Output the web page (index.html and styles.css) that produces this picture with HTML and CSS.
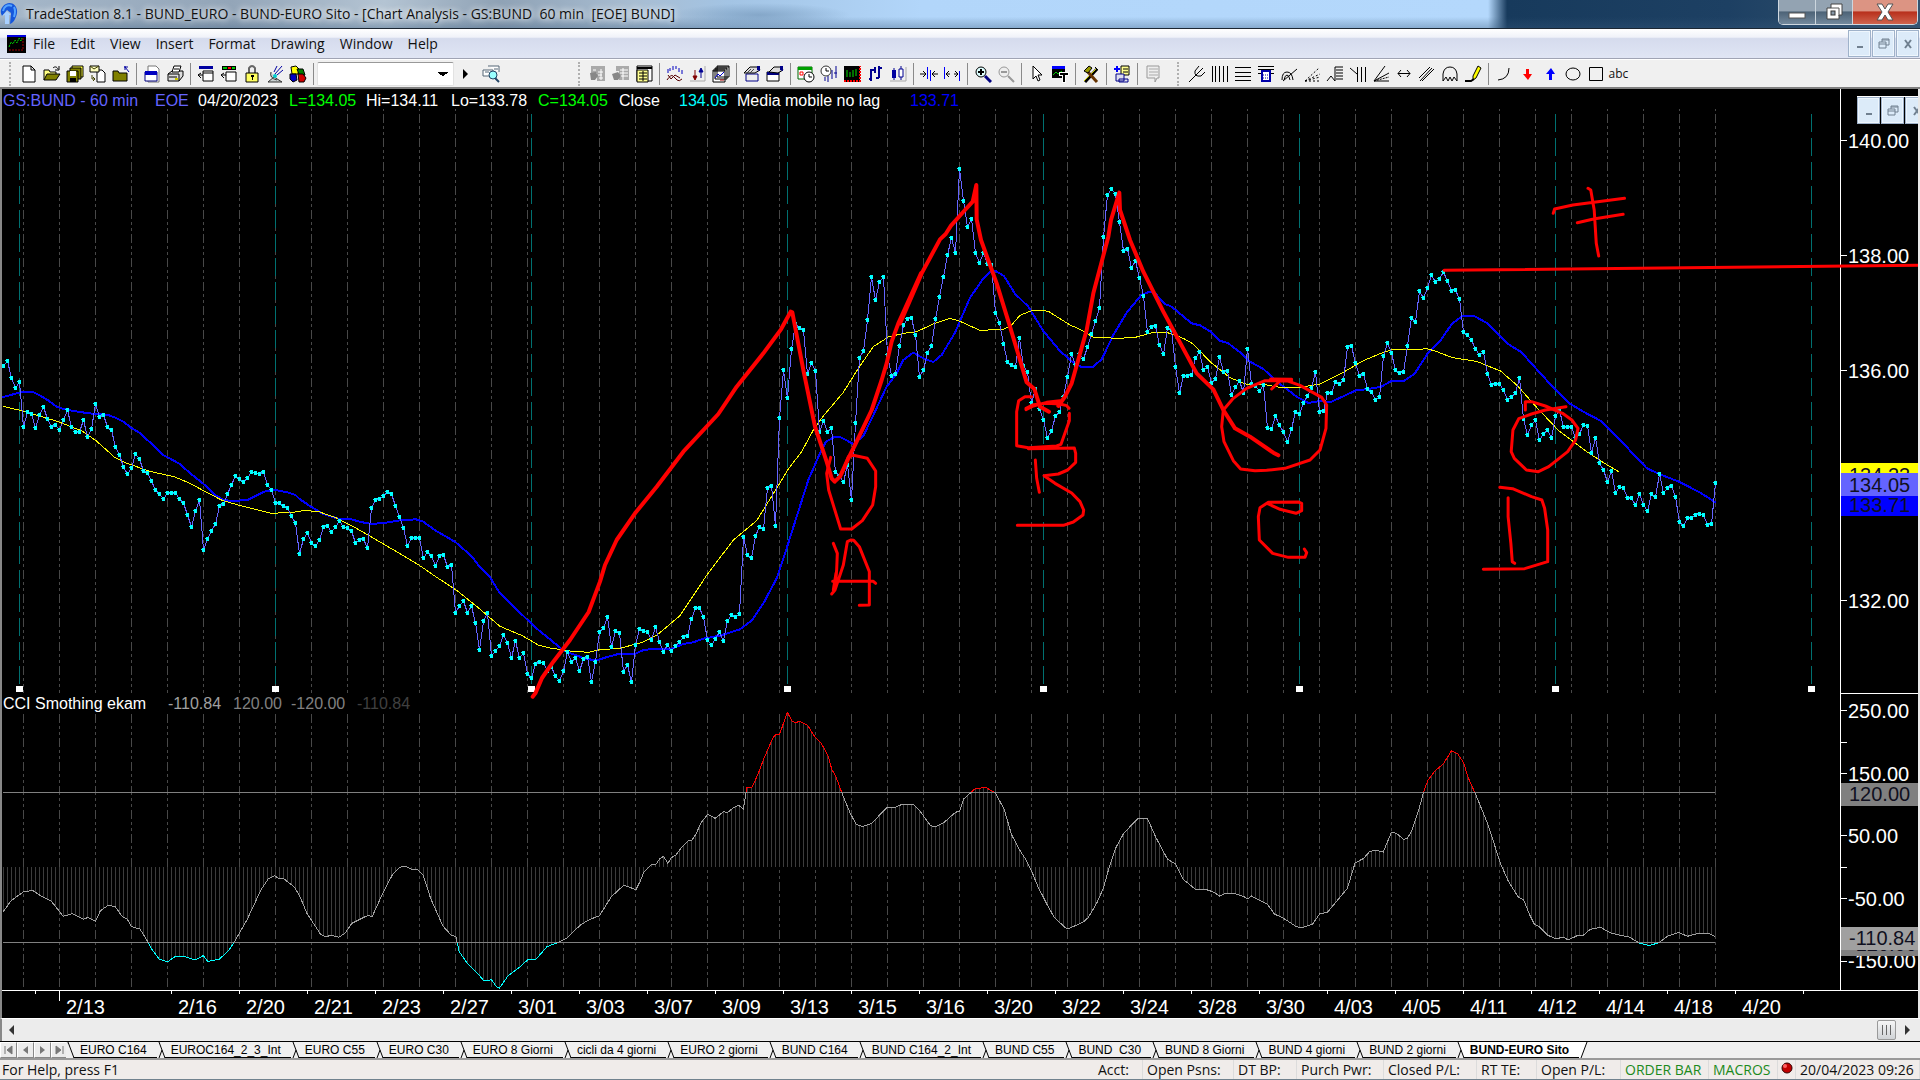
FILE: index.html
```html
<!DOCTYPE html>
<html lang="en">
<head>
<meta charset="utf-8">
<title>TradeStation 8.1</title>
<link rel="stylesheet" href="styles.css">
</head>
<body>
<header class="titlebar">
  <svg class="app-icon" viewBox="0 0 18 24"><path d="M6 2C11-1 18 3 17 11c-1 6-4 10-7 11l1-11-4-3-5 6C-1 9 2 4 6 2z" fill="#1557dc"/><path d="M7 9l4 4-2 0 0 9-4 0 0-9-3 1z" fill="#a8d0ff"/><path d="M3 9C4 4 8 2 12 4M14 5q2 4 0 10" fill="none" stroke="#55a4ff" stroke-width="2"/></svg>
  <h1 class="title">TradeStation 8.1 - BUND_EURO - BUND-EURO Sito - [Chart Analysis - GS:BUND  60 min  [EOE] BUND]</h1>
  <div class="winbuttons">
    <button class="wb" aria-label="Minimize"><svg width="18" height="20"><rect x="1" y="11" width="16" height="5" fill="#fff" stroke="#555"/></svg></button>
    <button class="wb" aria-label="Restore"><svg width="20" height="20"><path d="M7 2h11v11h-3v4H3V6h4z" fill="#fff" stroke="#444"/><path d="M7 6h8v8" fill="none" stroke="#555"/><rect x="7" y="9" width="4" height="4" fill="#8798a8" stroke="#333"/></svg></button>
    <button class="wb wb-close" aria-label="Close"><svg width="20" height="20"><path d="M2 2h5l3 5 3-5h5l-5 8 5 8h-5l-3-5-3 5H2l5-8z" fill="#fff" stroke="#555"/></svg></button>
  </div>
</header>
<nav class="menubar">
  <svg class="doc-icon" viewBox="0 0 19 18"><path d="M0 0h19v18H0z"/><path d="M0 0h19v2H0z" fill="#0000e0"/><path d="M2 12l2-5 2 2 2-4 2 3 2-5 2 3 1-3" fill="none" stroke="#00d000" stroke-dasharray="2 1"/><path d="M2 15h15M16 3v12" fill="none" stroke="#a00000" stroke-dasharray="2 1"/></svg>
  <button>File</button><button>Edit</button><button>View</button><button>Insert</button><button>Format</button><button>Drawing</button><button>Window</button><button>Help</button>
  <div class="mdi">
    <button aria-label="Minimize chart"><svg width="16" height="16"><path d="M5 10h6v2H5z" fill="#708090"/></svg></button>
    <button aria-label="Restore chart"><svg width="16" height="16"><path d="M6 6V3h7v6h-3M3 6h7v6H3zM3 8h7M6 4h7" fill="none" stroke="#708090"/></svg></button>
    <button aria-label="Close chart"><svg width="16" height="16"><path d="M5 4l6 8M11 4l-6 8" fill="none" stroke="#708090" stroke-width="2"/></svg></button>
  </div>
</nav>
<div class="toolbar">
  <div class="tools tools-file"><i class="grip"></i>
    <button aria-label="New"><svg viewBox="0 0 18 18"><path d="M3 1h8l4 4v12H3zM11 1v4h4" fill="#fff" stroke="#000"/></svg></button>
    <button aria-label="Open"><svg viewBox="0 0 18 18"><path d="M1 15V5h5l1 2h6v3" fill="#ffff80" stroke="#000"/><path d="M1 15l3-6h13l-4 6z" fill="#808000" stroke="#000"/><path d="M10 3c2-2 4-1 5 1M16 1v4h-4" fill="none" stroke="#000"/></svg></button>
    <button aria-label="Save all"><svg viewBox="0 0 18 18"><path d="M6 1h11v11H6z" fill="#ffff40" stroke="#000"/><path d="M4 3h11v11H4z" fill="#808000" stroke="#000"/><path d="M1 6h11v11H1z" fill="#808000" stroke="#000"/><path d="M4 6h6v5H4z" fill="#fff"/><path d="M4 13h6v4H4z"/></svg></button>
    <button aria-label="New from mail"><svg viewBox="0 0 18 18"><path d="M8 5h5l3 3v9H8z" fill="#fff" stroke="#000"/><path d="M1 1h9v6H1z" fill="#ffffc0" stroke="#000"/><path d="M1 1l4 3 5-3M3 10v4h3M4 12l2 2-2 2" fill="none" stroke="#404000"/></svg></button>
    <button aria-label="Close file"><svg viewBox="0 0 18 18"><path d="M1 16V6h5l1 2h8v8z" fill="#808000" stroke="#000"/><path d="M12 2h4M13 1v4M13 2l4 5" stroke="#0000a0" fill="none"/></svg></button>
    <i class="sep"></i>
    <button aria-label="Window"><svg viewBox="0 0 18 18"><path d="M5 1h8l3 3v13H5z" fill="#fff" stroke="#777"/><path d="M2 7h12v9H2z" fill="#fff" stroke="#000080"/><path d="M2 6h12v4H2z" fill="#0000c0"/></svg></button>
    <button aria-label="Print"><svg viewBox="0 0 18 18"><path d="M2 9l4-3h11v5l-4 5H2z" fill="#ddd" stroke="#000"/><path d="M6 7l2-6h7l-2 6z" fill="#fff" stroke="#000"/><path d="M2 9h11v7M8 4h5M3 12h8" fill="none" stroke="#000"/><path d="M9 13h3v2H9z" fill="#cc0"/></svg></button>
    <i class="sep"></i>
    <button aria-label="Insert bar"><svg viewBox="0 0 18 18"><path d="M2 1h14v3H2z" fill="#0000a0"/><path d="M6 6h10v10H6z" fill="#fff" stroke="#000"/><path d="M6 8h10M1 10h5M4 8l-3 2 3 3" fill="none" stroke="#000"/></svg></button>
    <button aria-label="Insert colours"><svg viewBox="0 0 18 18"><path d="M2 1h14v4H2z"/><path d="M3 2h4v2H3z" fill="#00c000"/><path d="M8 2h3v2H8z" fill="red"/><path d="M12 2h3v2h-3z" fill="#0c0"/><path d="M6 7h10v9H6zM1 10h5M4 8l-3 2 3 3" fill="#fff" stroke="#000"/></svg></button>
    <button aria-label="Lock"><svg viewBox="0 0 18 18"><path d="M6 8V3q3-4 6 0v5" fill="none" stroke="#666" stroke-width="2"/><path d="M3 8h12v9H3z" fill="#ffff60" stroke="#000"/><path d="M8 10h3v2h-1v3H9v-3H8z"/></svg></button>
    <button aria-label="Dish"><svg viewBox="0 0 18 18"><path d="M16 1L9 9M17 5l-6 5M11 1L8 7" stroke="#0000a0" fill="none"/><path d="M2 17l6-5 8 5zM5 7q-2 6 6 8" fill="#c8d0d0" stroke="#333"/><circle cx="9" cy="11" r="2" fill="#0cc"/></svg></button>
    <button aria-label="Objects"><svg viewBox="0 0 18 18"><path d="M2 2l5-1 3 3-1 5-6 0z" fill="#ffff00" stroke="#000"/><path d="M8 4l6 0 2 6-5 2z" fill="#008000" stroke="#000"/><path d="M1 9h6l1 6-4 2-3-3z" fill="#0000c0" stroke="#000"/><path d="M9 9h5l3 4-2 4h-5z" fill="#d00000" stroke="#000"/></svg></button>
    <i class="sep"></i>
    <select class="symbol" aria-label="Symbol"><option></option></select>
    <button class="go" aria-label="Go"><svg viewBox="0 0 18 18"><path d="M6 4l5 5-5 5z"/></svg></button>
    <button aria-label="Lookup"><svg viewBox="0 0 18 18"><path d="M1 5h10v6H1zM6 1h11v6M12 4h4M3 7h4" fill="#fff" stroke="#567"/><circle cx="11" cy="10" r="4" fill="#9ff" stroke="#246"/><path d="M13 13l4 4" stroke="#246" stroke-width="2"/></svg></button>
  </div>
  <div class="tools tools-chart"><i class="grip"></i>
    <button aria-label="Quote"><svg viewBox="0 0 18 18"><path d="M2 1h14v15H8V8H2z" fill="#aaa"/><path d="M4 5h3M9 7h5M9 10h4M10 13h4M12 4v11" stroke="#fff"/><path d="M1 8l6-1 2 4-3 4H2z" fill="#888"/></svg></button>
    <button aria-label="Quote list"><svg viewBox="0 0 18 18"><path d="M4 1h13v14H7V6H4z" fill="#aaa"/><path d="M8 5h8M8 8h8M8 11h8M11 3v12" stroke="#fff"/><path d="M0 9l6-2 3 4-3 4H2z" fill="#888"/></svg></button>
    <button aria-label="Table"><svg viewBox="0 0 18 18"><path d="M2 1h15v15H2z" fill="#fff" stroke="#000"/><path d="M2 2h15v2H2z"/><path d="M2 5h11v12H2z" fill="#ffff90" stroke="#000"/><path d="M4 8h8M4 11h8M4 14h8M8 6v10" stroke="#000"/></svg></button>
    <i class="sep"></i>
    <button aria-label="Studies"><svg viewBox="0 0 18 18"><path d="M2 8V4M4 6V3M7 5V1M10 4V1M13 7V3M16 9V5" stroke="#0000c0"/><path d="M1 15q4-6 6-4t4 4 5-1M2 10l3 4 4-4 5 3" fill="none" stroke="#500"/></svg></button>
    <button aria-label="Signals"><svg viewBox="0 0 18 18"><path d="M6 5v9M4 11l2 4 2-4z" stroke="#800000" fill="#800000"/><path d="M12 13V4M10 7l2-4 2 4z" stroke="#000090" fill="#000090"/><path d="M1 16h15V1" fill="none" stroke="#aaa"/></svg></button>
    <button aria-label="Cascade charts"><svg viewBox="0 0 18 18"><path d="M5 1h12v11H5zM3 3h12v11H3zM1 5h12v12H1z" fill="#fff" stroke="#000"/><path d="M1 6h12M3 4h12M5 2h12" stroke="#000"/><path d="M3 13l3-4 2 2 4-4" fill="none" stroke="#00c"/><path d="M8 15h4" stroke="#a00"/></svg></button>
    <i class="sep"></i>
    <button aria-label="Format study"><svg viewBox="0 0 18 18"><path d="M3 9h12v7H3z" fill="#eee" stroke="#008"/><path d="M1 8l6-6 8 0 2 3-5 3z" fill="#ddd" stroke="#000"/><path d="M14 1h3v5l-3-1z" fill="#008"/><path d="M4 8l4-4M7 8l4-4" stroke="#444"/></svg></button>
    <button aria-label="Format window"><svg viewBox="0 0 18 18"><path d="M1 7h12v9H1z" fill="#fff" stroke="#000"/><path d="M1 7h12v3H1z" fill="#000080"/><path d="M3 7l5-5 7 0 2 3-5 3z" fill="#ddd" stroke="#000"/><path d="M14 1h3v5l-3-1z" fill="#008"/></svg></button>
    <i class="sep"></i>
    <button aria-label="Calendar"><svg viewBox="0 0 18 18"><path d="M1 2h14v12H1z" fill="#fff" stroke="#060"/><path d="M1 2h14v3H1z" fill="#00a000"/><path d="M3 7h3v3H3z" fill="none" stroke="red"/><circle cx="12" cy="12" r="5" fill="#fff" stroke="#000"/><path d="M12 9v3h3" fill="none" stroke="#000"/></svg></button>
    <button aria-label="Interval"><svg viewBox="0 0 18 18"><circle cx="6" cy="6" r="5" fill="#fff" stroke="#333"/><path d="M6 3v3h3" fill="none" stroke="#000"/><path d="M5 12v4M8 11v6M12 5v9M16 1v12M14 8h3" stroke="#000090"/></svg></button>
    <button aria-label="Chart colours"><svg viewBox="0 0 18 18"><path d="M1 1h16v16H1z"/><path d="M1 16h16V1" fill="none" stroke="red" stroke-dasharray="2 1" stroke-width="2"/><path d="M4 5v7M7 7v5M10 5v7M13 4v7" stroke="#00e000"/></svg></button>
    <button aria-label="Bar chart"><svg viewBox="0 0 18 18"><path d="M5 4v12M5 5h4V2v6M3 14h2M13 1v12M10 13h3M13 3h3" fill="none" stroke="#000090" stroke-width="2"/></svg></button>
    <button aria-label="Candles"><svg viewBox="0 0 18 18"><path d="M5 3v12M12 1v14" stroke="#000090"/><path d="M3 5h4v8H3z" fill="#0000a0"/><path d="M10 4h4v8h-4z" fill="#fff" stroke="#000090"/><path d="M17 2v14H1" stroke="#aaa" fill="none"/></svg></button>
    <i class="sep"></i>
    <button aria-label="Narrow bars"><svg viewBox="0 0 18 18"><path d="M7.500 2v12M10.500 5v11" stroke="#00f"/><path d="M0 9h5M18 9h-5M3 6l3 3-3 3M15 6l-3 3 3 3" fill="none" stroke="#000"/></svg></button>
    <button aria-label="Widen bars"><svg viewBox="0 0 18 18"><path d="M1.500 2v12M16.500 6v10" stroke="#00f"/><path d="M3 9h4M15 9h-4M6 6L3 9l3 3M12 6l3 3-3 3" fill="none" stroke="#000"/></svg></button>
    <i class="sep"></i>
    <button aria-label="Zoom in"><svg viewBox="0 0 18 18"><circle cx="7" cy="7" r="5" fill="#dff" stroke="#000"/><path d="M4 7h6M7 4v6" stroke="#000" stroke-width="2"/><path d="M11 11l6 6" stroke="#000080" stroke-width="3"/></svg></button>
    <button aria-label="Zoom out"><svg viewBox="0 0 18 18"><circle cx="7" cy="7" r="5" fill="#eee" stroke="#999"/><path d="M4 7h6M11 11l6 6" stroke="#999" stroke-width="2"/></svg></button>
    <i class="sep"></i>
    <button aria-label="Pointer"><svg viewBox="0 0 18 18"><path d="M5 1v13l3-3 2 5 2-1-2-5h4z" fill="#fff" stroke="#000"/></svg></button>
    <button aria-label="Text on chart"><svg viewBox="0 0 18 18"><path d="M1 1h13v12H1z"/><path d="M1 1h13v3H1z" fill="#00f"/><path d="M2 10l3-3 2 2 4-3" stroke="#0c0" fill="none"/><path d="M8 9h10M13 8v10" stroke="#fff" stroke-width="4"/><path d="M9 9h8M13 8v9" stroke="#000" stroke-width="2"/></svg></button>
    <i class="sep"></i>
    <button aria-label="Tools"><svg viewBox="0 0 18 18"><path d="M3 17L15 4" stroke="#000" stroke-width="3"/><path d="M2 16L14 4" stroke="#cc0"/><path d="M5 6l10 11" stroke="#630" stroke-width="3"/><path d="M2 6l5-5 3 2-4 5zM13 2l3 3" fill="#990" stroke="#000"/></svg></button>
    <i class="sep"></i>
    <button aria-label="Add page"><svg viewBox="0 0 18 18"><path d="M8 1h8v9H8z" fill="#ffff90" stroke="#000"/><path d="M10 4h5M10 7h5" stroke="#000"/><path d="M3 9h8v7H3zM6 14h9v3H6z" fill="#dde" stroke="#008"/><path d="M1 4h6M4 1v6" stroke="#00f" stroke-width="2"/></svg></button>
    <i class="sep"></i>
    <button aria-label="Comment"><svg viewBox="0 0 18 18"><path d="M3 1h12v12h-2l-2 4v-4H3z" fill="#eee" stroke="#999"/><path d="M5 4h9M5 7h9M5 10h9" stroke="#aaa"/></svg></button>
  </div>
  <div class="tools tools-draw"><i class="grip"></i>
    <button aria-label="Andrews"><svg viewBox="0 0 18 18"><path d="M1 17l8-8M7 6q-1 6 6 5l4-4M7 6l4-5M9 9l6-6" fill="none" stroke="#000"/></svg></button>
    <button aria-label="Vertical lines"><svg viewBox="0 0 18 18"><path d="M1.500 1v16M4.500 1v16M8.500 1v16M12.500 1v16M16.500 1v16" stroke="#000"/></svg></button>
    <button aria-label="Horizontal lines"><svg viewBox="0 0 18 18"><path d="M1 2.500h16M1 7.500h16M1 11.500h16M1 15.500h16" stroke="#000"/></svg></button>
    <button aria-label="Calculator lines"><svg viewBox="0 0 18 18"><path d="M1 1.500h16M1 4.500h16M1 8.500h16" stroke="#000"/><path d="M5 6h8v10H5z" fill="#fff" stroke="#00a" stroke-width="2"/><path d="M6 10h6M6 13h6" stroke="#00a" stroke-dasharray="1 1"/></svg></button>
    <button aria-label="Arcs"><svg viewBox="0 0 18 18"><path d="M2 15q0-8 5-8t6 8M4 15q1-5 3-5t3 5M3 16L17 4" fill="none" stroke="#000"/></svg></button>
    <button aria-label="Fan"><svg viewBox="0 0 18 18"><path d="M2 16h15M2 16L16 3M2 16l15-7M2 16l15-4" fill="none" stroke="#000" stroke-dasharray="2 2"/></svg></button>
    <button aria-label="Extension"><svg viewBox="0 0 18 18"><path d="M1 16l4-5 4 5V2h8M10 5h7M10 8h7M10 11h7M10 14h7" fill="none" stroke="#000"/></svg></button>
    <button aria-label="Time lines"><svg viewBox="0 0 18 18"><path d="M1 3l7 6M8.500 2v15M12.500 2v15M16.500 2v15" fill="none" stroke="#000"/></svg></button>
    <button aria-label="Speed lines"><svg viewBox="0 0 18 18"><path d="M17 16H2L13 1M2 16L17 8" fill="none" stroke="#000"/><path d="M2 16l15-4" stroke="#000" stroke-dasharray="2 1"/></svg></button>
    <button aria-label="Horizontal arrow"><svg viewBox="0 0 18 18"><path d="M3 8.500h12M6 5L3 8.500l3 3.500M12 5l3 3.500-3 3.500" fill="none" stroke="#000"/></svg></button>
    <button aria-label="Channel"><svg viewBox="0 0 18 18"><path d="M1 13L12 2M4 16L16 4M2 16L14 3" fill="none" stroke="#000"/></svg></button>
    <button aria-label="Cycle"><svg viewBox="0 0 18 18"><path d="M2 16V9q1-7 7-7t7 7v7l-3-4-2 4-2-4-2 4-2-4z" fill="none" stroke="#000"/></svg></button>
    <button aria-label="Pencil"><svg viewBox="0 0 18 18"><path d="M14 1l3 2-5 10-3 2v-4z" fill="#ff0" stroke="#000"/><path d="M1 16h6l3-2" fill="none" stroke="#000" stroke-width="2"/></svg></button>
    <i class="sep"></i>
    <button aria-label="Arc"><svg viewBox="0 0 18 18"><path d="M3 15Q14 14 14 3" fill="none" stroke="#000"/></svg></button>
    <button aria-label="Down arrow"><svg viewBox="0 0 18 18"><path d="M8 4h3v5h3l-4 6-5-6h3z" fill="red"/></svg></button>
    <button aria-label="Up arrow"><svg viewBox="0 0 18 18"><path d="M8 15h3V9h3l-4-6-5 6h3z" fill="#00f"/></svg></button>
    <button aria-label="Ellipse"><svg viewBox="0 0 18 18"><ellipse cx="9" cy="9" rx="7" ry="6" fill="none" stroke="#000"/></svg></button>
    <button aria-label="Rectangle"><svg viewBox="0 0 18 18"><path d="M2.500 2.500h13v13h-13z" fill="none" stroke="#000"/></svg></button>
    <button class="abc">abc</button>
  </div>
</div>
<main class="chart">
  <svg class="canvas" viewBox="0 89 1920 929" id="chart">
    <defs>
      <linearGradient id="cci" gradientUnits="userSpaceOnUse" x1="0" y1="693" x2="0" y2="993">
        <stop offset="0.330" stop-color="#f00"/><stop offset="0.330" stop-color="#a0a0a0"/>
        <stop offset="0.832" stop-color="#a0a0a0"/><stop offset="0.832" stop-color="#0ff"/>
      </linearGradient>
    </defs>
    <g id="grid"></g>
    <g class="label head">
      <text x="3" y="106" class="violet">GS:BUND - 60 min</text><text x="155" y="106" class="violet">EOE</text>
      <text x="198" y="106">04/20/2023</text><text x="289" y="106" class="green">L=134.05</text>
      <text x="366" y="106">Hi=134.11</text><text x="451" y="106">Lo=133.78</text>
      <text x="538" y="106" class="green">C=134.05</text><text x="619" y="106">Close</text>
      <text x="679" y="106" class="cyan">134.05</text><text x="737" y="106">Media mobile no lag</text><text x="910" y="106" class="blue">133.71</text>
      <text x="3" y="709">CCI Smothing ekam</text><text x="168" y="709" class="g1">-110.84</text>
      <text x="233" y="709" class="g2">120.00</text><text x="291" y="709" class="g2">-120.00</text><text x="357" y="709" class="g3">-110.84</text>
    </g>
    <g class="ma blue-line">
      <polyline transform="translate(0 340) scale(.35714 .33333)" points="9,171 54,158 65,156 92,156 110,165 133,180 160,201 189,210 230,217 265,222 300,224 325,234 345,245 368,264 390,278 425,312 457,345 480,358 502,371 535,402 570,432 600,463 626,480 650,483 693,480 715,468 740,455 771,450 805,457 827,465 840,478 872,501 905,522 950,537 980,537 1010,546 1040,552 1080,548 1120,541 1165,538 1185,545 1220,572 1275,606 1320,648 1345,683 1370,708 1398,757 1440,803 1458,822"/>
      <polyline transform="translate(520 280) scale(.33333)" points="0,998 30,1027 60,1054 90,1078 130,1111 165,1125 200,1137 230,1141 255,1133 295,1122 345,1122 365,1112 400,1106 455,1106 490,1092 520,1087 550,1076 600,1067 660,1048 695,1022 733,965 770,895 800,805 830,710 865,600 900,520 918,485 945,470 965,473 1000,492 1030,468 1065,395 1100,320 1130,280 1150,240 1180,218 1210,235 1240,246 1265,225 1305,158 1350,53 1387,0"/>
      <polyline transform="translate(900 150) scale(.33333)" points="247,390 270,365 285,362 312,378 345,431 385,470 430,543 480,603 520,638 545,651 578,651 605,628 640,555 680,488 725,434 750,425 768,433 795,462 815,470 875,520 900,526 935,547 960,572 985,580 1020,607 1045,632 1090,657 1140,702 1190,740 1225,759 1260,753 1290,757 1330,739 1370,720 1400,718 1440,711"/>
      <polyline transform="translate(1380 150) scale(.34438 .33333)" points="0,712 35,692 70,692 100,672 140,608 175,572 210,520 240,498 275,499 310,519 345,555 370,581 410,606 450,652 500,709 550,760 590,785 640,812 700,872 740,918 775,955 811,972 870,996 930,1028 974,1057"/>
    </g>
    <g class="ma yellow-line">
      <polyline transform="translate(0 340) scale(.35714 .33333)" points="9,199 60,212 160,244 230,273 270,303 320,351 350,368 420,394 490,411 530,429 570,452 620,480 660,493 710,507 760,520 820,517 855,511 895,516 940,533 990,560 1040,591 1120,641 1180,680 1220,710 1280,752 1340,804 1400,859 1458,885"/>
      <polyline transform="translate(520 280) scale(.33333)" points="0,1063 55,1095 90,1104 150,1113 205,1117 240,1109 300,1105 370,1086 410,1066 480,1007 560,886 640,780 710,722 770,625 805,567 845,515 880,450 910,408 970,337 1015,265 1060,200 1105,171 1150,160 1190,155 1240,132 1290,115 1320,124 1380,151 1450,148 1475,135 1500,106 1535,92 1560,91"/>
      <polyline transform="translate(900 150) scale(.33333)" points="420,481 445,484 510,525 540,538 580,562 660,565 710,561 760,547 800,547 850,565 880,582 930,635 990,683 1040,703 1100,705 1150,714 1200,712 1260,702 1330,667 1390,632 1440,611 1480,598 1560,598"/>
      <polyline transform="translate(1380 150) scale(.34438 .33333)" points="116,598 135,596 160,603 210,623 280,634 350,663 400,708 460,778 520,843 600,905 660,945 693,965"/>
    </g>
    <g id="price"></g>
    <g id="axes"></g>
    <g class="label">
      <text x="1848" y="148">140.00</text><text x="1848" y="263">138.00</text><text x="1848" y="378">136.00</text><text x="1848" y="608">132.00</text>
      <text x="1848" y="718">250.00</text><text x="1848" y="781">150.00</text><text x="1848" y="843">50.00</text><text x="1848" y="906">-50.00</text><text x="1848" y="968">-150.00</text>
      <rect x="1841" y="463" width="77" height="23" fill="#ff0"/><text x="1849" y="482" class="dark">134.23</text>
      <rect x="1841" y="493" width="77" height="23" fill="#00f"/><text x="1849" y="512" class="dark">133.71</text>
      <rect x="1841" y="473" width="77" height="23" fill="#6464ff"/><text x="1849" y="492" class="dark">134.05</text>
      <rect x="1841" y="783" width="77" height="23" fill="#808080"/><text x="1849" y="801" class="dark">120.00</text>
      <rect x="1841" y="933" width="77" height="23" fill="#808080"/><text x="1849" y="951" class="dark">-120.00</text>
      <rect x="1841" y="927" width="77" height="23" fill="#a0a0a0"/><text x="1849" y="945" class="dark">-110.84</text>
    </g>
    <g class="ink">
      <g transform="translate(520 280) scale(.33333)">
        <path class="wave" d="M38 1250L46 1240 66 1194 100 1145 150 1080 206 996 240 905 255 855 290 780 345 700 410 620 490 515 595 402 650 320 730 220 783 148 812 95 817 97 850 270 885 440 920 545 935 595 944 605 960 590 985 535 1005 495 1055 390 1085 300 1100 250 1115 185 1135 130 1203 -20"/>
        <path d="M932 532L920 580 926 630 962 747 995 747 1027 722 1058 675 1067 620 1067 573 1042 535 1000 526 985 530 970 570 960 590"/>
        <path d="M940 790L952 820 950 870 945 930 935 942M945 930L970 855 982 785 992 780 1001 781 1018 800 1048 875 1048 975 1018 976M948 880L940 930M938 904L1060 904 1067 910"/>
      </g>
      <g transform="translate(900 150) scale(.33333)">
        <path class="wave" d="M0 520L65 370 120 268 137 252 153 227 195 180 218 155 229 105 230 208 243 270 270 345 290 400 330 530 380 697 403 717 420 770 447 785"/>
        <path class="wave" d="M475 768L495 740 515 700 560 540 580 430 625 260 633 210 658 128 660 180 690 270 730 365 790 485 890 670 940 718 970 780 1005 835 1050 860 1120 908 1135 916"/>
        <path d="M395 740L375 740 356 752 350 785 350 887 385 893 470 888 483 883 508 812 508 790M378 779L400 768 440 757 480 752M378 775L400 764 440 760 480 762 500 767 507 775"/>
        <path d="M385 896L523 894 527 910 527 937 503 960 475 972 432 977 465 1000 515 1029 540 1055 551 1080 549 1095 520 1116 490 1126 352 1126M406 930L410 985 418 1027"/>
        <path d="M1115 717L1140 693M1112 687L1175 688M1175 693L1140 692 1095 692 1040 715 1000 745 970 780 965 830 972 875 1000 932 1022 957 1065 962 1100 961 1155 955 1230 930 1260 900 1278 835 1280 765 1265 742 1200 706 1160 692"/>
        <path d="M1105 1062L1140 1078 1188 1090 1205 1082 1205 1060 1195 1056 1105 1057 1080 1073 1075 1100 1078 1170 1118 1210 1165 1222 1215 1222 1220 1208 1213 1197"/>
      </g>
      <g transform="translate(1380 150) scale(.34438 .33333)">
        <path d="M422 780L422 755 440 755 480 768 530 790 557 810 575 835 568 870 545 905 490 950 460 965 425 960 390 925 381 905 386 840 403 806 440 792 480 780 540 770"/>
        <path d="M348 1012L385 1016 440 1040 470 1050 478 1075 487 1140 487 1235 420 1256 300 1258M372 1043L372 1100 380 1180 384 1235 391 1240"/>
        <path d="M503 190L507 177 560 165 710 145M573 218L620 207 706 193M604 115L612 120 622 180 628 280 635 318M186 361L1568 346"/>
      </g>
    </g>
  </svg>
  <div class="mdi mdi-inner">
    <button aria-label="Minimize pane"><svg width="16" height="16"><path d="M5 10h6v2H5z" fill="#708090"/></svg></button>
    <button aria-label="Restore pane"><svg width="16" height="16"><path d="M6 6V3h7v6h-3M3 6h7v6H3zM3 8h7M6 4h7" fill="none" stroke="#708090"/></svg></button>
    <button aria-label="Close pane"><svg width="16" height="16"><path d="M5 4l6 8M11 4l-6 8" fill="none" stroke="#708090" stroke-width="2"/></svg></button>
  </div>
</main>
<div class="scrollbar">
  <button aria-label="Scroll left"><svg width="8" height="12"><path d="M6 1v10L1 6z" fill="#333"/></svg></button>
  <span class="track"></span>
  <button class="thumb" aria-label="Scroll position"><svg width="12" height="12"><path d="M1.500 1v10M5.500 1v10M9.500 1v10" stroke="#666"/></svg></button>
  <button aria-label="Scroll right"><svg width="8" height="12"><path d="M2 1v10l5-5z" fill="#333"/></svg></button>
</div>
<nav class="tabs" id="tabs">
  <div class="tabnav">
    <button aria-label="First"><svg width="11" height="10"><path d="M2 1v8M9 1v8L4 5z" fill="#777" stroke="#777"/></svg></button>
    <button aria-label="Previous"><svg width="11" height="10"><path d="M8 1v8L3 5z" fill="#777"/></svg></button>
    <button aria-label="Next"><svg width="11" height="10"><path d="M3 1v8l5-4z" fill="#777"/></svg></button>
    <button aria-label="Last"><svg width="11" height="10"><path d="M9 1v8M2 1v8l5-4z" fill="#777" stroke="#777"/></svg></button>
  </div>
</nav>
<footer class="status">
  <span class="help">For Help, press F1</span><span>Acct:</span><span>Open Psns:</span><span>DT BP:</span><span>Purch Pwr:</span><span>Closed P/L:</span><span>RT TE:</span><span>Open P/L:</span><span class="on">ORDER BAR</span><span class="on">MACROS</span>
  <span class="lamp"><svg width="13" height="14"><circle cx="7" cy="7" r="5" fill="#c00000" stroke="#300"/><circle cx="5" cy="5" r="2" fill="#ff6060"/></svg></span><span>20/04/2023 09:26</span>
</footer>
<script src="chart.js"></script>
</body>
</html>
```
FILE: styles.css
```css
* { box-sizing: border-box; }
body { margin: 0; height: 100vh; display: flex; flex-direction: column; background: #f0f0f0; font-family: "Open Sans", "Noto Sans", sans-serif; font-size: 14px; color: #111; overflow: hidden; }
button { border: 0; padding: 0; margin: 0; background: none; font: inherit; color: inherit; display: flex; align-items: center; justify-content: center; }
.titlebar { height: 29px; flex: none; display: flex; align-items: center; padding: 0 2px 0 0; border-bottom: 1px solid #1c2733; background:
  radial-gradient(ellipse 90px 12px at 760px 15px, rgba(100, 135, 170, .5), transparent),
  linear-gradient(to bottom, transparent 60%, rgba(55, 90, 125, .35)),
  linear-gradient(to right, #a6b8ca 0, #93a5b8 12%, #b4c4d3 20%, #8fa2b5 26%, #a8bdd2 33%, #a3c4e4 38%, #b2d6fa 48%, #b4d8fc 77.500%, #173a5c 78.500%, #1d4063 90%, #35536f 100%); }
.app-icon { width: 18px; height: 24px; margin-right: 8px; }
.title { margin: 0; flex: 1; font-size: 14px; font-weight: 400; white-space: pre; line-height: 28px; text-shadow: 0 0 6px #fff, 0 0 8px rgba(255, 255, 255, .6); }
.winbuttons { display: flex; align-self: flex-start; height: 25px; border: 1px solid #cfd8e0; border-top: 0; border-radius: 0 0 5px 5px; overflow: hidden; }
.wb { width: 37px; border-right: 1px solid #ccd6de; background: linear-gradient(#93a3b2 0 45%, #4d6377 50%, #73899d); }
.wb-close { width: 64px; border-right: 0; background: linear-gradient(#dc9483 0 45%, #b8301c 50%, #d0644e); }
.menubar { height: 30px; flex: none; display: flex; align-items: center; gap: 15px; padding: 0 1px 0 7px; background: linear-gradient(#fff 0, #f0f2f9 28%, #d5dbed 33%, #e0e5f4 100%); border-bottom: 1px solid #a0a4b4; }
.doc-icon { width: 19px; height: 18px; margin-right: -8px; }
.mdi { display: flex; gap: 1px; margin-left: auto; }
.mdi button { width: 23px; height: 27px; background: #dcebf9; border: 1px solid #9fb2ca; box-shadow: inset 0 0 0 1px #eef6fd; }
.toolbar { height: 30px; flex: none; display: flex; background: #f0f0f0; border-top: 1px solid #fff; border-bottom: 2px solid #808080; }
.tools { display: flex; align-items: center; }
.tools button { width: 23px; height: 22px; flex: none; }
.tools svg { width: 18px; height: 18px; }
.tools-file { width: 569px; padding-left: 8px; }
.tools-chart { width: 605px; padding-left: 8px; }
.tools-draw { padding-left: 2px; }
.grip { width: 8px; height: 24px; flex: none; border-left: 2px dotted #b0b0b0; margin-left: 1px; }
.sep { width: 8px; height: 22px; flex: none; background: linear-gradient(#8a8a8a, #8a8a8a) 4px 0 / 1px 100% no-repeat; }
.symbol { width: 137px; height: 24px; flex: none; appearance: none; border: 1px solid #e2e2e2; border-top-color: #999; border-radius: 2px; background: linear-gradient(to bottom right, #000 50%, transparent 50%) 125px 9px / 5px 5px no-repeat, linear-gradient(to bottom left, #000 50%, transparent 50%) 120px 9px / 5px 5px no-repeat, #fff; }
.tools .go { margin-right: 2px; }
.tools .abc { font: 12px "Open Sans", sans-serif; }
.chart { flex: 1; min-height: 0; position: relative; background: #000; border-left: 2px solid #888; border-right: 2px solid #e8e8e8; overflow: hidden; }
.canvas { display: block; width: calc(100% + 4px); height: 100%; margin-left: -2px; font-family: "Liberation Sans", Arial, sans-serif; }
.mdi-inner { position: absolute; top: 7px; right: -10px; border-top: 1px solid #fff; }
.label { fill: #fff; font-size: 20px; }
.head { font-size: 16px; }
.violet { fill: #6464ff; } .green { fill: #0f0; } .cyan { fill: #0ff; } .blue { fill: #00f; }
.g1 { fill: #a0a0a0; } .g2 { fill: #808080; } .g3 { fill: #404040; } .dark { fill: #101020; }
.gridline { stroke: #484848; stroke-dasharray: 9 3 3 3 3 3; }
.gridline-price { stroke-dashoffset: 19; }
.cycle { stroke: #007070; stroke-dasharray: 18 6; }
.bar { stroke: #3c3c3c; }
.level { stroke: #808080; }
.axis { stroke: #fff; fill: none; }
#grid, #axes { shape-rendering: crispEdges; }
.ma { fill: none; shape-rendering: crispEdges; }
.ma *, .ink path { vector-effect: non-scaling-stroke; stroke-linejoin: round; stroke-linecap: round; }
.blue-line { stroke: #00f; stroke-width: 2px; }
.yellow-line { stroke: #ff0; stroke-width: 1px; }
.close { fill: none; stroke: #6464ff; shape-rendering: crispEdges; }
.dot { fill: #0ff; shape-rendering: crispEdges; }
.cci { fill: none; stroke: url(#cci); shape-rendering: crispEdges; }
.ink { fill: none; stroke: #f00; stroke-width: 3px; }
.ink .wave { stroke-width: 4px; }
.scrollbar { height: 23px; flex: none; display: flex; align-items: center; padding: 0 5px 0 2px; background: #ececec; border-top: 1px solid #fff; border-left: 2px solid #888; }
.scrollbar button { width: 16px; height: 20px; }
.track { flex: 1; }
.scrollbar .thumb { width: 19px; margin-right: 3px; border: 1px solid #999; border-radius: 2px; background: linear-gradient(#f6f6f6, #d0d3d6); }
.tabs { height: 19px; flex: none; display: flex; border-top: 1px solid #000; border-bottom: 2px solid #999; background: #f0f0f0; font-family: "Liberation Sans", Arial, sans-serif; font-size: 12px; }
.tabnav { display: flex; width: 68px; }
.tabnav button { width: 17px; border: 1px solid #888; border-left-color: #fff; border-top-color: #fff; background: #ececec; }
.tab { position: relative; padding: 0 12px; border-bottom: 1px solid #000; white-space: pre; color: #000; text-decoration: none; line-height: 16px; }
.tab-on { background: #fff; font-weight: 700; }
.slant { position: absolute; left: -2px; top: 0; width: 10px; height: 16px; }
.tab-on .slant-end { left: auto; right: -8px; }
.status { height: 20px; flex: none; display: grid; grid-template-columns: 1fr 49px 91px 63px 87px 93px 60px 84px 88px 69px 18px 124px; background: #f0ecea; border-bottom: 1px solid #71828e; line-height: 20px; }
.status span { padding-left: 4px; border-right: 1px solid #dcdcdc; white-space: nowrap; overflow: hidden; }
.status .help { padding-left: 2px; border: 0; }
.status .on { color: #1c8a1c; }
.status .lamp { padding-left: 2px; }
```
FILE: chart.js
```js
const NS = 'http://www.w3.org/2000/svg';
function add(parent, tag, attrs, text) {
  const el = document.createElementNS(NS, tag);
  for (const k in attrs) el.setAttribute(k, attrs[k]);
  if (text) el.textContent = text;
  parent.appendChild(el);
  return el;
}
const byId = id => document.getElementById(id);

// Closing prices, one per bar: each run is [top of run, offsets in thirds of a unit].
const runs = [
  [340, [77,62,113,144,125,261,215,222,264,225,200,237,261,255,270,240,210,261,275,276,240,291,267,191,231,225,261,270,321,345,381,402,383,342,357,393,399,423,450,462,477,459,459,459,477,489,525,561,513,480,630,597,573,551,498,491,462,435,408,417,426,414,396,399,402,396,435,450,489,489,498,504,527,549,642,597,579,609,618,600,560,558,576,561,543,561,564,573,609,600,597,624,504,480,477,468,455,462,498,531,564,618,594,594,594,654,636,648,678,648,645,681,675,819,798,783,819,798,849,930,843,819,948,933,918,885,909,954,903,954,939,1002]],
  [280, [1194,1152,1146,1149,1173,1162,1188,1203,1173,1116,1146,1134,1173,1137,1131,1206,1146,1056,1044,1011,1101,1053,1059,1176,1155,1206,1095,1047,1053,1056,1080,1041,1086,1116,1095,1113,1098,1086,1071,1068,1017,984,984,1011,1080,1095,1077,1056,1083,1023,1005,1011,1002,771,825,834,768,741,747,624,618,738,414,270,354,207,132,144,150,282,249,273,456,423,456,444,576,588,606,555,660,429]],
  [140, [654,633,540,411,480,426,411,645,708,702,618,555,537,534,585,711,690,639,618,537,471,411,345,294,339,87,183,261,237,339,369,339,372,375,519,549,612,666,675,681,594]],
  [150, [648,666,759,717,777,810,864,843,798,786,741,681,612,645,612,627,591,552,513,474,261,135,117,132,216,303,297,354,333,384,438,546,531,528,585,612,534,540,651,729,678,678,675,624,606,660,651,699,687,621,666,663,735,711,693,730,597,702,708,723,705,834,837,798,825,846,876,837,786,792,759,738,714,666,786,783,729,729,696,702,690,591,588,639,678,672,717,726,750,741,618,579,609,660,669,666,588,504,516,423,444,414,375,396,387,366,393,423,420,447,546,555,570,597,615,606,672,705,702,702,720,750,741,729,684,807,855,825,810,870,852,840,864,798,780,831,831,831,865,852,825,828,909,864,939,960,996,963,1029,1011,1014,1044,1044,1065,1032,1065,1083,1032,1041,972,1029,1014,1008,1041,1116,1128,1104,1104,1095,1092,1095,1125,1122,999]]
];
const closes = [];
for (const [top, offs] of runs) for (const v of offs) closes.push(Math.round(top + v / 3));

// Oscillator turning points for each third of the pane.
const cciParts = [
  [0, '8,695 27,662 57,636 80,631 100,648 125,663 145,693 155,709 177,701 205,718 215,712 234,724 246,692 265,676 282,680 300,710 312,718 322,740 343,747 358,777 372,808 390,837 410,846 430,829 450,829 478,840 498,827 509,844 537,838 560,812 577,780 605,720 640,628 657,597 672,587 685,597 695,596 722,622 735,650 752,700 785,762 795,769 815,767 830,772 845,760 862,730 900,707 912,709 940,634 962,583 980,562 990,559 1000,562 1010,570 1023,569 1037,586 1055,655 1085,738 1105,765 1117,770 1125,815 1145,850 1170,880 1185,902 1197,903 1203,897 1215,918 1223,925 1245,887 1275,860 1293,839 1313,838 1340,800 1370,786 1390,773 1422,735 1445,718 1468,708 1498,650 1528,616 1545,623 1558,629'],
  [640, '0,605 10,575 28,553 38,555 48,537 58,529 68,550 77,533 88,525 98,508 118,483 127,480 137,463 150,427 166,403 184,415 205,395 214,398 230,382 242,376 253,387 262,323 275,321 290,280 302,240 325,175 333,163 342,163 350,135 361,97 372,122 380,129 390,124 410,135 428,170 443,188 460,225 470,268 480,290 495,340 515,400 530,433 545,440 567,431 605,382 625,382 640,374 670,374 685,392 712,437 723,441 745,427 773,397 783,393 793,357 822,325 848,323 870,338 892,387 910,463 930,510 945,538 960,575 975,620 1000,680 1015,712 1040,741 1048,747 1085,727 1098,713 1120,667 1135,625 1150,560 1165,505 1185,460 1220,415 1243,415 1265,475 1292,537 1312,552 1330,597 1360,627 1385,628 1403,635 1420,648 1435,640 1455,640 1480,650 1488,657 1498,648 1520,662 1537,672 1555,703'],
  [1280, '0,709 15,720 40,740 55,743 80,732 97,702 117,696 148,650 165,625 184,549 205,535 220,514 235,511 253,516 273,457 285,460 303,478 312,475 322,455 340,390 352,335 362,302 380,272 400,252 420,213 435,221 450,248 460,290 480,345 510,435 540,550 560,605 583,650 597,660 612,705 623,732 633,738 655,765 675,776 695,772 706,780 730,766 743,766 760,748 785,742 812,760 855,771 880,789 905,797 930,787 950,768 977,757 998,769 1025,760 1050,760 1066,770']
];
const cci = [];
for (const [left, s] of cciParts) for (const p of s.split(' ')) {
  const [x, y] = p.split(',').map(Number);
  cci.push([left + x / 2.45, 680 + y / 3]);
}
function cciAt(x) {
  let i = 1;
  while (i < cci.length - 1 && cci[i][0] < x) i++;
  const [a, b] = [cci[i - 1], cci[i]];
  return a[1] + (b[1] - a[1]) * (x - a[0]) / (b[0] - a[0]);
}

const grid = byId('grid');
for (let x = 23.5; x < 1720; x += 36) {
  add(grid, 'path', { class: 'gridline gridline-price', d: `M${x} 109V693` });
  add(grid, 'path', { class: 'gridline', d: `M${x} 714V987` });
}
for (let x = 19.5; x < 1830; x += 256) {
  add(grid, 'path', { class: 'cycle', d: `M${x} 114V686` });
  add(grid, 'rect', { x: x - 3.5, y: 686, width: 7, height: 6, fill: '#fff' });
}
for (let x = 3.5; x < 1716; x += 4) add(grid, 'path', { class: 'bar', d: `M${x} 867V${Math.round(cciAt(x))}` });
add(grid, 'path', { class: 'level', d: 'M3 792.500H1715M3 942.500H1715' });

const price = byId('price');
add(price, 'polyline', { class: 'close', points: closes.map((y, i) => `${3.5 + 4 * i},${y}`).join(' ') });
closes.forEach((y, i) => add(price, 'path', { class: 'dot', d: `M${2 + 4 * i} ${y - 2}h3v4h-3zm-1 1h1v1h-1z` }));
add(price, 'polyline', { class: 'cci', points: cci.map(p => p.join()).join(' ') });

const axes = byId('axes');
add(axes, 'path', { class: 'axis', d: 'M1840.500 89V990M2 990.500H1918M1840 693.500H1918' });
for (const y of [140, 255, 370, 600, 710, 742, 773, 835, 867, 898, 961]) add(axes, 'path', { class: 'axis', d: `M1841 ${y + 0.5}h6` });
add(axes, 'path', { class: 'axis', d: 'M35.500 990v4M59.500 990v11' });
const dates = ['2/16', '2/20', '2/21', '2/23', '2/27', '3/01', '3/03', '3/07', '3/09', '3/13', '3/15', '3/16', '3/20', '3/22', '3/24', '3/28', '3/30', '4/03', '4/05', '4/11', '4/12', '4/14', '4/18', '4/20'];
add(axes, 'text', { class: 'label', x: 66, y: 1014 }, '2/13');
dates.forEach((d, k) => {
  add(axes, 'path', { class: 'axis', d: `M${171.5 + 68 * k} 990v4` });
  add(axes, 'text', { class: 'label', x: 178 + 68 * k, y: 1014 }, d);
});
add(axes, 'path', { class: 'axis', d: 'M1803.500 990v4' });

const names = ['EURO C164', 'EUROC164_2_3_Int', 'EURO C55', 'EURO C30', 'EURO 8 Giorni', 'cicli da 4 giorni', 'EURO 2 giorni', 'BUND C164', 'BUND C164_2_Int', 'BUND C55', 'BUND  C30', 'BUND 8 Giorni', 'BUND 4 giorni', 'BUND 2 giorni', 'BUND-EURO Sito'];
names.forEach((name, i) => {
  const a = document.createElement('a');
  const last = i === names.length - 1;
  a.href = '#';
  a.className = last ? 'tab tab-on' : 'tab';
  a.textContent = name;
  const s = add(a, 'svg', { class: 'slant', viewBox: '0 0 10 16' });
  add(s, 'path', { d: 'M0 0L1 0 8 16H0z', fill: '#f0f0f0' });
  add(s, 'path', { d: i ? 'M2 0L8 16M5 8L2 16' : 'M2 0L8 16', stroke: '#000', fill: 'none' });
  if (last) {
    const e = add(a, 'svg', { class: 'slant slant-end', viewBox: '0 0 10 16' });
    add(e, 'path', { d: 'M0 0H8L2 16H0z', fill: '#fff' });
    add(e, 'path', { d: 'M8 0L2 16', stroke: '#000', fill: 'none' });
  }
  byId('tabs').appendChild(a);
});
```
